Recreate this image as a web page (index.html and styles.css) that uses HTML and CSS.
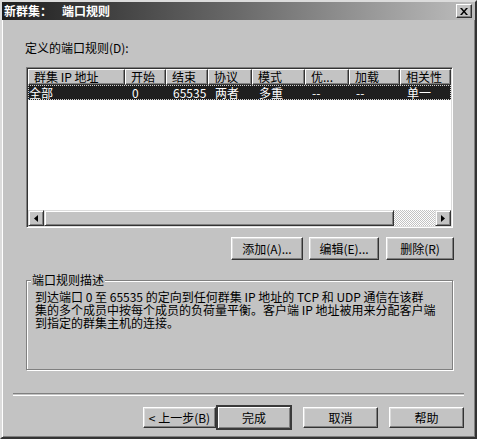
FILE: index.html
```html
<!DOCTYPE html>
<html>
<head>
    <title>新群集: 端口规则</title>
    <link rel="stylesheet" href="styles.css">
</head>
<body>
    <div class="window">
        <div class="titlebar">
            <span class="title-text">新群集：<span class="title-gap"></span>端口规则</span>
            <button class="close-button" aria-label="关闭">
                <svg width="8" height="7" viewBox="0 0 8 7">
                    <path d="M0 0h2l2 2.5L6 0h2L5 3.5 8 7H6L4 4.5 2 7H0l3-3.5z" fill="#000"/>
                </svg>
            </button>
        </div>

        <div class="main">
            <div class="label">定义的端口规则(D):</div>

            <!-- Port rules list -->
            <div class="list">
                <div class="list-header">
                    <div class="col col-1">群集 IP 地址</div>
                    <div class="col col-2">开始</div>
                    <div class="col col-3">结束</div>
                    <div class="col col-4">协议</div>
                    <div class="col col-5">模式</div>
                    <div class="col col-6">优...</div>
                    <div class="col col-7">加载</div>
                    <div class="col col-8">相关性</div>
                </div>
                <div class="list-body">
                    <div class="list-row selected">
                        <div class="cell col-1 first">全部</div>
                        <div class="cell col-2">0</div>
                        <div class="cell col-3">65535</div>
                        <div class="cell col-4">两者</div>
                        <div class="cell col-5">多重</div>
                        <div class="cell col-6">--</div>
                        <div class="cell col-7">--</div>
                        <div class="cell col-8">单一</div>
                    </div>
                </div>
                <div class="hscroll">
                    <div class="scroll-arrow">
                        <svg width="4" height="7" viewBox="0 0 4 7"><path d="M4 0v7L0 3.5z" fill="#000"/></svg>
                    </div>
                    <div class="scroll-thumb"></div>
                    <div class="scroll-track"></div>
                    <div class="scroll-arrow">
                        <svg width="4" height="7" viewBox="0 0 4 7"><path d="M0 0v7l4-3.5z" fill="#000"/></svg>
                    </div>
                </div>
            </div>

            <div class="list-buttons">
                <button class="button add-button">添加(A)...</button>
                <button class="button edit-button">编辑(E)...</button>
                <button class="button delete-button">删除(R)</button>
            </div>

            <!-- Description -->
            <fieldset class="desc">
                <legend>端口规则描述</legend>
                <p class="desc-text">到达端口 0 至 65535 的定向到任何群集 IP 地址的 TCP 和 UDP 通信在该群<br>集的多个成员中按每个成员的负荷量平衡。客户端 IP 地址被用来分配客户端<br>到指定的群集主机的连接。</p>
            </fieldset>
        </div>

        <div class="separator"></div>

        <div class="footer">
            <button class="button back-button">&lt; 上一步(B)</button>
            <button class="button default-button">完成</button>
            <button class="button footer-button">取消</button>
            <button class="button footer-button">帮助</button>
        </div>
    </div>
</body>
</html>
```

FILE: styles.css
```css
body {
    margin: 0;
    padding: 0;
    background-color: #c3c3c3;
    font-family: "Noto Sans CJK SC", "Liberation Sans", sans-serif;
    font-size: 12px;
    color: #000;
}
.window {
    width: 477px;
    height: 439px;
    box-sizing: border-box;
    background-color: #c3c3c3;
    border: 2px solid;
    border-color: #dcdcdc #333 #333 #dcdcdc;
    box-shadow: inset 1px 1px #fff, inset -1px -1px #808080;
    display: flex;
    flex-direction: column;
}
.titlebar {
    height: 18px;
    padding: 0 3px 0 2px;
    display: flex;
    align-items: center;
    justify-content: space-between;
    background: linear-gradient(to right, #1e1e1e, #6a6a6a 50%, #bdbdbd);
}
.title-text {
    color: #fff;
    font-weight: bold;
    line-height: 12px;
}
.title-gap {
    display: inline-block;
    width: 10px;
}
.close-button {
    width: 16px;
    height: 14px;
    padding: 0;
    display: flex;
    align-items: center;
    justify-content: center;
    background-color: #c3c3c3;
    border: 1px solid;
    border-color: #fff #333 #333 #fff;
    box-shadow: inset -1px -1px #808080;
}
.main {
    padding: 0 22px 0 24px;
    display: flex;
    flex-direction: column;
}
.label {
    margin-top: 22px;
    margin-left: -1px;
    line-height: 12px;
}

/* List view */
.list {
    margin-top: 13px;
    height: 161px;
    box-sizing: border-box;
    background-color: #fff;
    border: 1px solid;
    border-color: #808080 #fff #fff #808080;
    box-shadow: inset 1px 1px #333, inset -1px -1px #dcdcdc;
    padding: 1px;
    display: flex;
    flex-direction: column;
}
.list-header {
    display: flex;
    height: 16px;
}
.list-header .col {
    box-sizing: border-box;
    height: 16px;
    line-height: 14px;
    padding-left: 5px;
    white-space: nowrap;
    overflow: hidden;
    background-color: #c3c3c3;
    border: 1px solid;
    border-color: #fff #333 #333 #fff;
    box-shadow: inset -1px -1px #808080;
}
.col-1 { width: 97px; flex: none; }
.col-2 { width: 41px; flex: none; }
.col-3 { width: 42px; flex: none; }
.col-4 { width: 44px; flex: none; }
.col-5 { width: 53px; flex: none; }
.col-6 { width: 44px; flex: none; }
.col-7 { width: 51px; flex: none; }
.col-8 { width: 51px; flex: none; }
.list-body {
    flex: 1;
}
.list-row {
    display: flex;
    height: 15px;
    line-height: 15px;
}
.list-row.selected {
    background-color: #1f1f1f;
    color: #fff;
    outline: 1px dotted #d0d0d0;
    outline-offset: -1px;
}
.cell {
    box-sizing: border-box;
    padding-left: 7px;
    white-space: nowrap;
}
.cell.first {
    padding-left: 1px;
}
.hscroll {
    display: flex;
    height: 16px;
}
.scroll-arrow {
    width: 16px;
    height: 16px;
    box-sizing: border-box;
    display: flex;
    align-items: center;
    justify-content: center;
    background-color: #c3c3c3;
    border: 1px solid;
    border-color: #dcdcdc #333 #333 #dcdcdc;
    box-shadow: inset 1px 1px #fff, inset -1px -1px #808080;
}
.scroll-thumb {
    width: 350px;
    height: 16px;
    box-sizing: border-box;
    background-color: #c3c3c3;
    border: 1px solid;
    border-color: #dcdcdc #333 #333 #dcdcdc;
    box-shadow: inset 1px 1px #fff, inset -1px -1px #808080;
}
.scroll-track {
    flex: 1;
    background: repeating-conic-gradient(#fff 0 25%, #c3c3c3 0 50%) 0 0 / 2px 2px;
}

/* Buttons */
.button {
    box-sizing: border-box;
    padding: 0;
    font-family: inherit;
    font-size: 12px;
    color: #000;
    background-color: #c3c3c3;
    border: 1px solid;
    border-color: #fff #333 #333 #fff;
    box-shadow: inset -1px -1px #808080, inset 1px 1px #dcdcdc;
    white-space: nowrap;
}
.list-buttons {
    margin-top: 9px;
    margin-right: -1px;
    display: flex;
    justify-content: flex-end;
    gap: 6px;
}
.list-buttons .button {
    height: 23px;
}
.add-button { width: 72px; }
.edit-button { width: 70px; }
.delete-button { width: 68px; margin-left: 1px; }

/* Group box */
.desc {
    margin: 14px 0 0 0;
    height: 96px;
    box-sizing: border-box;
    padding: 4px 8px 0 8px;
    border: 1px solid #808080;
    box-shadow: inset 1px 1px #fff, 1px 1px #fff;
}
.desc legend {
    padding: 0 1px;
    margin-left: -4px;
    line-height: 12px;
    background-color: #c3c3c3;
}
.desc-text {
    margin: 0;
    line-height: 13px;
    white-space: nowrap;
}

/* Wizard footer */
.separator {
    margin: 23px 11px 0 11px;
    height: 1px;
    border-top: 1px solid #808080;
    border-bottom: 1px solid #fff;
}
.footer {
    margin-top: 9px;
    padding-right: 11px;
    height: 25px;
    display: flex;
    align-items: center;
    justify-content: flex-end;
}
.footer .button {
    height: 21px;
}
.back-button {
    width: 73px;
}
.default-button {
    width: 76px;
    margin-right: 11px;
    border: 2px solid #3a3a3a;
    box-shadow: inset 1px 1px #fff, inset -1px -1px #808080;
}
.footer .default-button {
    height: 25px;
}
.footer-button {
    width: 75px;
}
.footer-button + .footer-button {
    margin-left: 11px;
}
```
